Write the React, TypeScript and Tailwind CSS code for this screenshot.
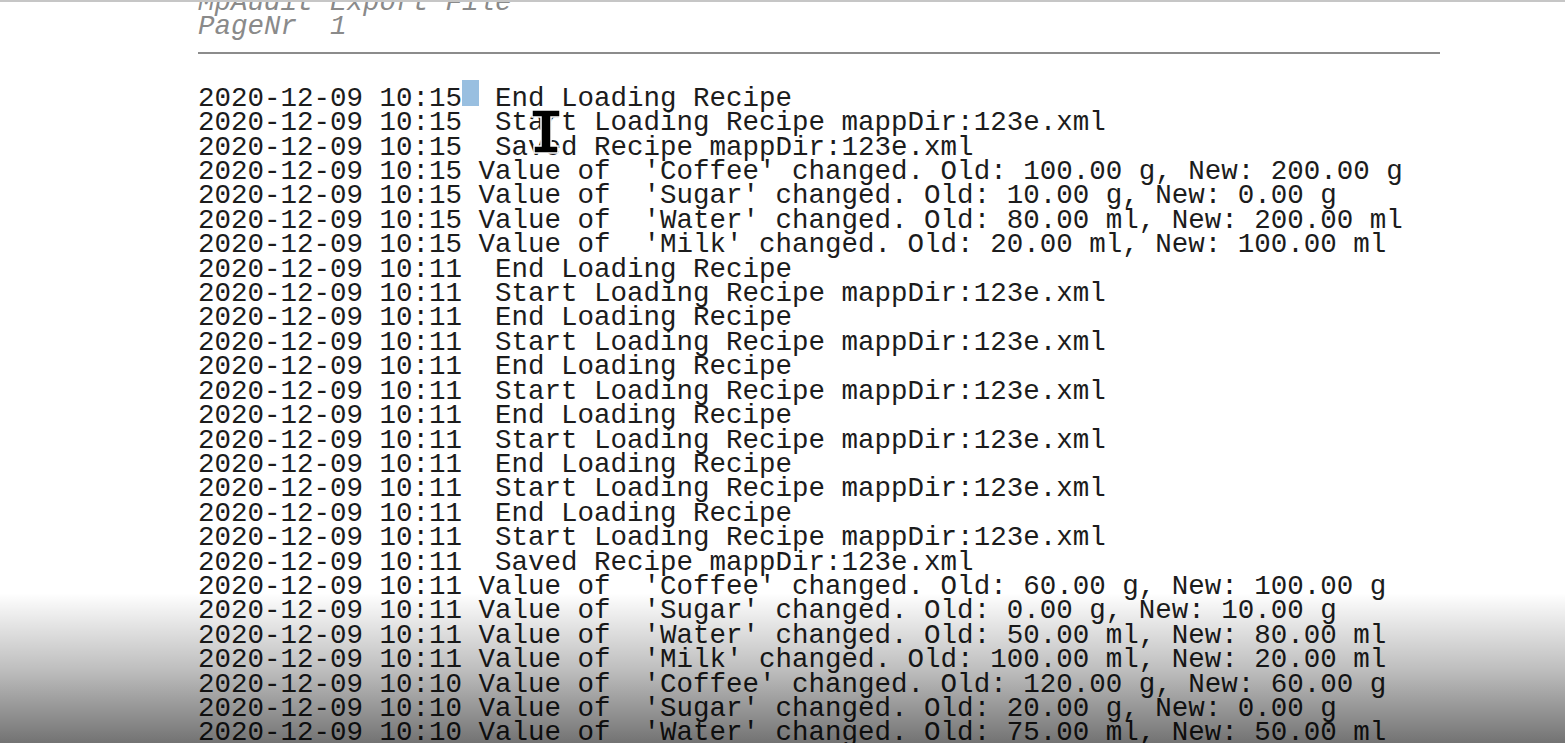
import React from 'react';

const rows: string[] = [
    '2020-12-09 10:15  Start Loading Recipe mappDir:123e.xml',
    '2020-12-09 10:15  Saved Recipe mappDir:123e.xml',
    "2020-12-09 10:15 Value of  'Coffee' changed. Old: 100.00 g, New: 200.00 g",
    "2020-12-09 10:15 Value of  'Sugar' changed. Old: 10.00 g, New: 0.00 g",
    "2020-12-09 10:15 Value of  'Water' changed. Old: 80.00 ml, New: 200.00 ml",
    "2020-12-09 10:15 Value of  'Milk' changed. Old: 20.00 ml, New: 100.00 ml",
    '2020-12-09 10:11  End Loading Recipe',
    '2020-12-09 10:11  Start Loading Recipe mappDir:123e.xml',
    '2020-12-09 10:11  End Loading Recipe',
    '2020-12-09 10:11  Start Loading Recipe mappDir:123e.xml',
    '2020-12-09 10:11  End Loading Recipe',
    '2020-12-09 10:11  Start Loading Recipe mappDir:123e.xml',
    '2020-12-09 10:11  End Loading Recipe',
    '2020-12-09 10:11  Start Loading Recipe mappDir:123e.xml',
    '2020-12-09 10:11  End Loading Recipe',
    '2020-12-09 10:11  Start Loading Recipe mappDir:123e.xml',
    '2020-12-09 10:11  End Loading Recipe',
    '2020-12-09 10:11  Start Loading Recipe mappDir:123e.xml',
    '2020-12-09 10:11  Saved Recipe mappDir:123e.xml',
    "2020-12-09 10:11 Value of  'Coffee' changed. Old: 60.00 g, New: 100.00 g",
    "2020-12-09 10:11 Value of  'Sugar' changed. Old: 0.00 g, New: 10.00 g",
    "2020-12-09 10:11 Value of  'Water' changed. Old: 50.00 ml, New: 80.00 ml",
    "2020-12-09 10:11 Value of  'Milk' changed. Old: 100.00 ml, New: 20.00 ml",
    "2020-12-09 10:10 Value of  'Coffee' changed. Old: 120.00 g, New: 60.00 g",
    "2020-12-09 10:10 Value of  'Sugar' changed. Old: 20.00 g, New: 0.00 g",
    "2020-12-09 10:10 Value of  'Water' changed. Old: 75.00 ml, New: 50.00 ml",
];

function IBeam() {
    return (
        <svg width="32" height="48" viewBox="0 0 32 48" className="absolute left-[530px] top-[106px]">
            <path
                d="M2 2 H30 V9 H21 V38 H28 V45 H4 V38 H11 V9 H2 Z"
                fill="#000"
                stroke="#fff"
                strokeWidth="1.5"
            />
        </svg>
    );
}

export default function App() {
    return (
        <div className="relative h-[743px] w-[1565px] overflow-hidden bg-white border-t-2 border-[#c6c6c6]">
            <div
                className="-mt-[11px] pl-[198px] text-[27.5px] leading-[24.4px] text-[#1c1c1c] whitespace-pre"
                style={{ fontFamily: '"Liberation Mono", "Courier New", monospace' }}
            >
                {/* export header */}
                <div className="italic text-[#8a8a8a]">
                    <div>MpAudit Export File</div>
                    <div>PageNr  1</div>
                </div>
                <div className="mt-[12px] h-[2px] w-[1242px] bg-[#8c8c8c]" />

                <div className="mt-[26px]">
                    <div>
                        2020-12-09 10:15
                        <span className="inline-block h-[26px] w-[1ch] bg-[#99bfe0]" /> End Loading Recipe
                    </div>
                    {rows.map((row, idx) => (
                        <div key={idx}>{row}</div>
                    ))}
                </div>
            </div>

            <IBeam />

            {/* player shade at the bottom */}
            <div className="pointer-events-none absolute bottom-0 left-0 h-[150px] w-full bg-gradient-to-b from-transparent via-black/25 to-black/55" />
        </div>
    );
}
